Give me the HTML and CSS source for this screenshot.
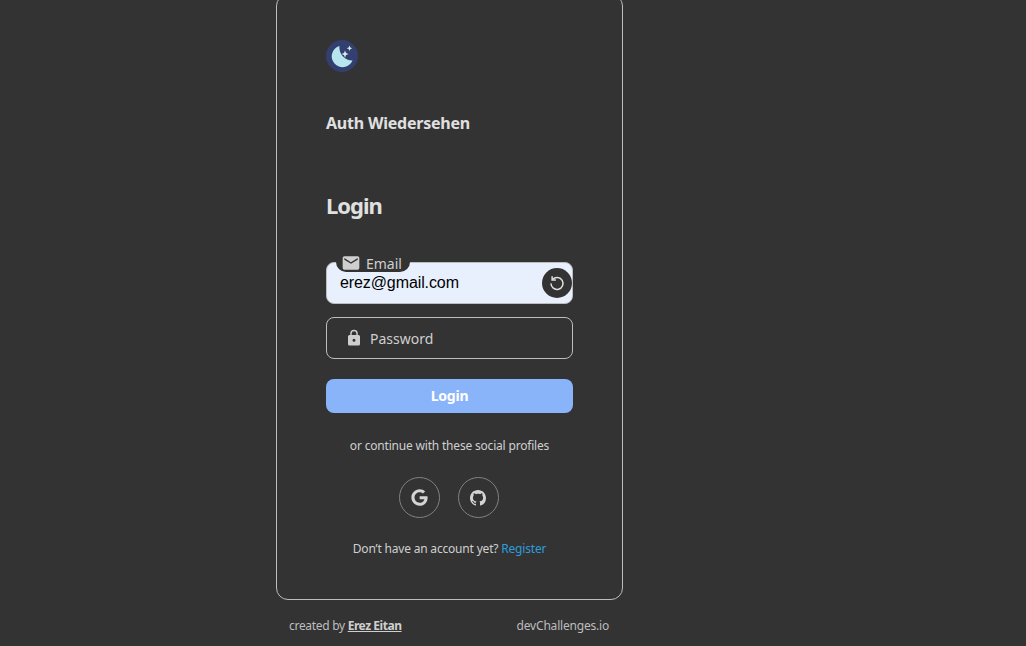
FILE: index.html
```html
<!DOCTYPE html>
<html lang="en">
<head>
  <meta charset="UTF-8" />
  <meta name="viewport" content="width=device-width, initial-scale=1.0"/>
  <title>Auth Wiedersehen</title>
  <link rel="stylesheet" href="styles.css">
</head>
<body>
  <div class="page">
    <div class="card">
      <div class="logo">
        <svg width="34" height="34" viewBox="0 0 34 34">
          <circle cx="17" cy="16" r="16" fill="#33406f"/>
          <path d="M14.5 6A10.8 10.8 0 1 0 27.5 20.5A13 13 0 0 1 14.5 6Z" fill="#b7e6ee"/>
          <path d="M20 10.5l1 2.6 2.6 1-2.6 1-1 2.6-1-2.6-2.6-1 2.6-1Z" fill="#d5eef4"/>
          <path d="M24.5 5.5l.8 2 2 .8-2 .8-.8 2-.8-2-2-.8 2-.8Z" fill="#d5eef4"/>
        </svg>
      </div>
      <div class="brand">Auth Wiedersehen</div>
      <h1 class="title">Login</h1>

      <div class="field filled">
        <span class="tag">
          <svg class="tag-icon" width="20" height="20" viewBox="0 0 24 24"><path d="M20 4H4a2 2 0 0 0-2 2v12a2 2 0 0 0 2 2h16a2 2 0 0 0 2-2V6a2 2 0 0 0-2-2Zm0 4-8 5-8-5V6l8 5 8-5Z" fill="#cfcfcf"/></svg>
          Email
        </span>
        <span class="value">erez@gmail.com</span>
        <button class="reset">
          <svg width="18" height="18" viewBox="0 0 24 24" fill="none" stroke="#e0e0e0" stroke-width="2"><path d="M6.3 7A8 8 0 1 1 4 12.5"/><path d="M5.5 3v5h5" /></svg>
        </button>
      </div>

      <div class="field">
        <svg class="lock" width="18" height="18" viewBox="0 0 24 24"><path d="M18 8h-1V6A5 5 0 0 0 7 6v2H6a2 2 0 0 0-2 2v10a2 2 0 0 0 2 2h12a2 2 0 0 0 2-2V10a2 2 0 0 0-2-2Zm-6 9a2 2 0 1 1 0-4 2 2 0 0 1 0 4Zm3.1-9H8.9V6a3.1 3.1 0 0 1 6.2 0Z" fill="#cfcfcf"/></svg>
        <span class="placeholder">Password</span>
      </div>

      <button class="submit">Login</button>

      <p class="note">or continue with these social profiles</p>

      <div class="socials">
        <a class="social">
          <svg width="17" height="17" viewBox="0 0 488 512"><path d="M488 261.8C488 403.3 391.1 504 248 504 110.8 504 0 393.2 0 256S110.8 8 248 8c66.8 0 123 24.5 166.3 64.9l-67.5 64.9C258.5 52.6 94.3 116.6 94.3 256c0 86.5 69.1 156.6 153.7 156.6 98.2 0 135-70.4 140.8-106.9H248v-85.3h236.1c2.3 12.7 3.9 24.9 3.9 41.4z" fill="#d4d4d4"/></svg>
        </a>
        <a class="social">
          <svg width="16" height="16" viewBox="0 0 16 16"><path d="M8 0C3.58 0 0 3.58 0 8c0 3.54 2.29 6.53 5.47 7.59.4.07.55-.17.55-.38 0-.19-.01-.82-.01-1.49-2.01.37-2.53-.49-2.69-.94-.09-.23-.48-.94-.82-1.13-.28-.15-.68-.52-.01-.53.63-.01 1.08.58 1.23.82.72 1.21 1.87.87 2.33.66.07-.52.28-.87.51-1.07-1.78-.2-3.64-.89-3.64-3.95 0-.87.31-1.59.82-2.15-.08-.2-.36-1.02.08-2.12 0 0 .67-.21 2.2.82.64-.18 1.32-.27 2-.27s1.36.09 2 .27c1.53-1.04 2.2-.82 2.2-.82.44 1.1.16 1.92.08 2.12.51.56.82 1.27.82 2.15 0 3.07-1.87 3.75-3.65 3.95.29.25.54.73.54 1.48 0 1.07-.01 1.93-.01 2.2 0 .21.15.46.55.38A8.01 8.01 0 0 0 16 8c0-4.42-3.58-8-8-8Z" fill="#d4d4d4"/></svg>
        </a>
      </div>

      <p class="note register">Don’t have an account yet? <a class="link">Register</a></p>
    </div>

    <div class="footer">
      <span class="credit">created by <a class="author">Erez Eitan</a></span>
      <span>devChallenges.io</span>
    </div>
  </div>
</body>
</html>
```

FILE: styles.css
```css
html, body { height: 100%; }
body { font-family: "Noto Sans", sans-serif; background: #333; color: #e0e0e0; margin: 0; padding: 0; overflow: hidden; }
.page { width: 347px; margin: -6px auto 0 276px; }
.card { box-sizing: border-box; height: 606px; border: 1px solid #bdbdbd; border-radius: 12px; padding: 45px 49px 0; }
.logo { height: 34px; margin-left: -1px; }
.logo svg { display: block; }
.brand { font-size: 16px; font-weight: 700; line-height: 22px; margin-top: 38px; letter-spacing: -0.22px; }
.title { font-size: 22px; font-weight: 700; line-height: 30px; margin: 56px 0 0; letter-spacing: -1px; }
.field { box-sizing: border-box; position: relative; display: flex; align-items: center; width: 247px; height: 42px; border: 1px solid #bdbdbd; border-radius: 8px; margin-top: 13px; padding-left: 18px; }
.field.filled { background: #e8f0fe; margin-top: 42px; padding-left: 13px; }
.tag { position: absolute; left: 9px; top: -9px; display: flex; align-items: center; gap: 5px; height: 18px; padding: 0 8px 0 5px; background: #333; border-radius: 0 0 10px 10px; font-size: 14px; color: #cfcfcf; }
.value { font-family: "Liberation Sans", Arial, sans-serif; font-size: 16px; letter-spacing: -0.1px; color: #000; margin-top: -1px; }
.reset { position: absolute; right: 0; top: 5px; width: 30px; height: 30px; padding: 0; border: none; border-radius: 50%; background: #333; display: flex; align-items: center; justify-content: center; }
.lock { margin-right: 7px; }
.placeholder { font-size: 14px; color: #cfcfcf; }
.submit { display: block; width: 247px; height: 34px; margin-top: 20px; padding: 0 0 2px; border: none; border-radius: 8px; background: #89b4fa; color: #fff; font-family: inherit; font-size: 14px; font-weight: 700; letter-spacing: -0.2px; }
.note { font-size: 12px; line-height: 16px; color: #cfcfcf; text-align: center; margin: 25px 0 0; letter-spacing: -0.19px; }
.socials { display: flex; justify-content: center; gap: 18px; margin-top: 23px; margin-left: -2px; }
.social { box-sizing: border-box; width: 41px; height: 41px; border: 1px solid #828282; border-radius: 50%; display: flex; align-items: center; justify-content: center; }
.register { margin-top: 23px; }
.link { color: #2d9cdb; }
.footer { display: flex; justify-content: space-between; padding: 0 14px 0 13px; margin-top: 18px; font-size: 12px; line-height: 16px; color: #bdbdbd; letter-spacing: -0.2px; }
.credit { letter-spacing: -0.3px; }
.author { font-weight: 700; color: #cfcfcf; text-decoration: underline; letter-spacing: -0.45px; }
```
